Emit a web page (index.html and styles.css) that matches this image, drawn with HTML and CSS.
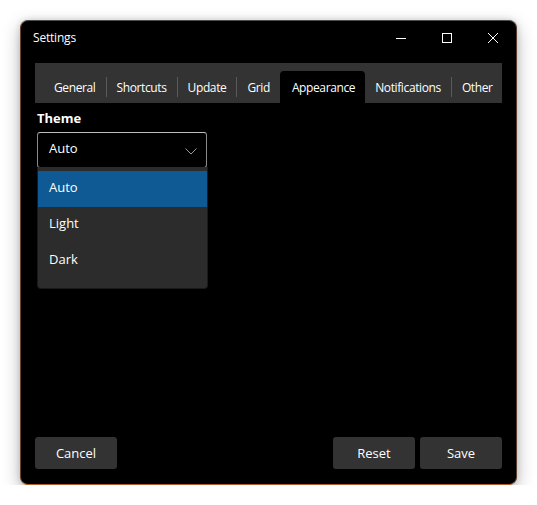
FILE: index.html
```html
<!DOCTYPE html>
<html>
<head>
<meta charset="utf-8">
<link rel="stylesheet" href="styles.css">
</head>
<body>
<div class="window">
  <div class="titlebar">
    <span class="title">Settings</span>
    <div class="caption">
      <span class="cap-btn"><svg width="10" height="10" viewBox="0 0 10 10"><path d="M0 5.5H10" stroke="#fff" stroke-width="1"/></svg></span>
      <span class="cap-btn"><svg width="10" height="10" viewBox="0 0 10 10"><rect x="0.5" y="0.5" width="9" height="9" fill="none" stroke="#fff" stroke-width="1"/></svg></span>
      <span class="cap-btn"><svg width="10" height="10" viewBox="0 0 10 10"><path d="M0 0L10 10M10 0L0 10" stroke="#fff" stroke-width="1"/></svg></span>
    </div>
  </div>
  <div class="content">
    <div class="tabs">
      <span class="tab first">General</span>
      <span class="sep"></span>
      <span class="tab">Shortcuts</span>
      <span class="sep"></span>
      <span class="tab">Update</span>
      <span class="sep"></span>
      <span class="tab">Grid</span>
      <span class="tab active">Appearance</span>
      <span class="tab">Notifications</span>
      <span class="sep"></span>
      <span class="tab">Other</span>
      <span class="sep"></span>
    </div>
    <div class="label">Theme</div>
    <div class="combo-wrap">
      <div class="combo">
        <span class="combo-text">Auto</span>
        <svg width="12" height="7" viewBox="0 0 12 7"><path d="M0.5 0.5L6 6L11.5 0.5" fill="none" stroke="#9a9a9a" stroke-width="1"/></svg>
      </div>
      <div class="popup">
        <div class="item selected">Auto</div>
        <div class="item">Light</div>
        <div class="item">Dark</div>
      </div>
    </div>
    <div class="spacer"></div>
    <div class="buttons">
      <button class="btn">Cancel</button>
      <div class="right">
        <button class="btn">Reset</button>
        <button class="btn">Save</button>
      </div>
    </div>
  </div>
</div>
</body>
</html>
```
FILE: styles.css
```css
html, body {
  margin: 0;
  padding: 0;
  background: #ffffff;
}
body {
  font-family: "Open Sans", "Noto Sans", sans-serif;
  font-size: 12px;
  color: #ffffff;
}
.window {
  margin: 20px 0 0 20px;
  width: 495px;
  height: 463px;
  background: #000;
  border: 1px solid;
  border-color: #4e4e4e #5a4030 #b0602a #6a4030;
  border-radius: 8px;
  box-shadow: 0 6px 18px rgba(0,0,0,0.28), 0 0 6px rgba(0,0,0,0.15);
  display: flex;
  flex-direction: column;
}
.titlebar {
  height: 34px;
  display: flex;
  align-items: center;
  justify-content: space-between;
  padding-left: 12px;
}
.title {
  font-size: 12px;
  letter-spacing: -0.2px;
  margin-top: -2px;
}
.caption {
  display: flex;
  align-self: stretch;
}
.cap-btn {
  width: 46px;
  display: flex;
  align-items: center;
  justify-content: center;
}
.content {
  flex: 1;
  display: flex;
  flex-direction: column;
  padding: 8px 14px 15px 14px;
}
.tabs {
  height: 40px;
  background: #333333;
  display: flex;
  align-items: flex-end;
  padding-left: 8px;
  overflow: hidden;
}
.tab {
  flex-shrink: 0;
  height: 32px;
  line-height: 33px;
  padding: 0 10px 0 10px;
  font-size: 12px;
  letter-spacing: -0.38px;
  white-space: nowrap;
}
.tab.first {
  padding-left: 11px;
}
.tab.active {
  background: #000;
  border-radius: 4px 4px 0 0;
  padding: 0 10px 0 12px;
}
.sep {
  flex-shrink: 0;
  width: 1px;
  height: 20px;
  background: #5a5a5a;
  align-self: flex-end;
  margin-bottom: 6px;
}
.label {
  font-weight: 700;
  font-size: 13px;
  margin-top: 7px;
  line-height: 16px;
  padding-left: 2px;
}
.combo-wrap {
  position: relative;
  margin-top: 6px;
  margin-left: 2px;
  width: 170px;
}
.combo {
  height: 34px;
  border: 1px solid #8a8a8a;
  border-top-color: #bdbdbd;
  border-radius: 3px;
  display: flex;
  align-items: center;
  justify-content: space-between;
  padding: 0 9px 0 11px;
  font-size: 13px;
}
.combo-text {
  margin-top: -4px;
}
.combo svg {
  margin-top: 2px;
}
.popup {
  position: absolute;
  left: 0;
  top: 35px;
  width: 169px;
  background: #2c2c2c;
  border: 1px solid #1a1a1a;
  border-top: none;
  border-radius: 0 0 4px 4px;
  padding: 4px 0 9px 0;
  box-shadow: 0 2px 4px rgba(0,0,0,0.5);
}
.item {
  height: 36px;
  line-height: 32px;
  padding-left: 11px;
  font-size: 13px;
}
.item.selected {
  background: #0f5a94;
}
.spacer {
  flex: 1;
}
.buttons {
  display: flex;
  justify-content: space-between;
}
.right {
  display: flex;
  gap: 5px;
}
.btn {
  width: 82px;
  height: 32px;
  background: #333333;
  border: none;
  border-radius: 3px;
  color: #fff;
  font-family: "Open Sans", "Noto Sans", sans-serif;
  font-size: 13px;
  padding: 0;
}
```
